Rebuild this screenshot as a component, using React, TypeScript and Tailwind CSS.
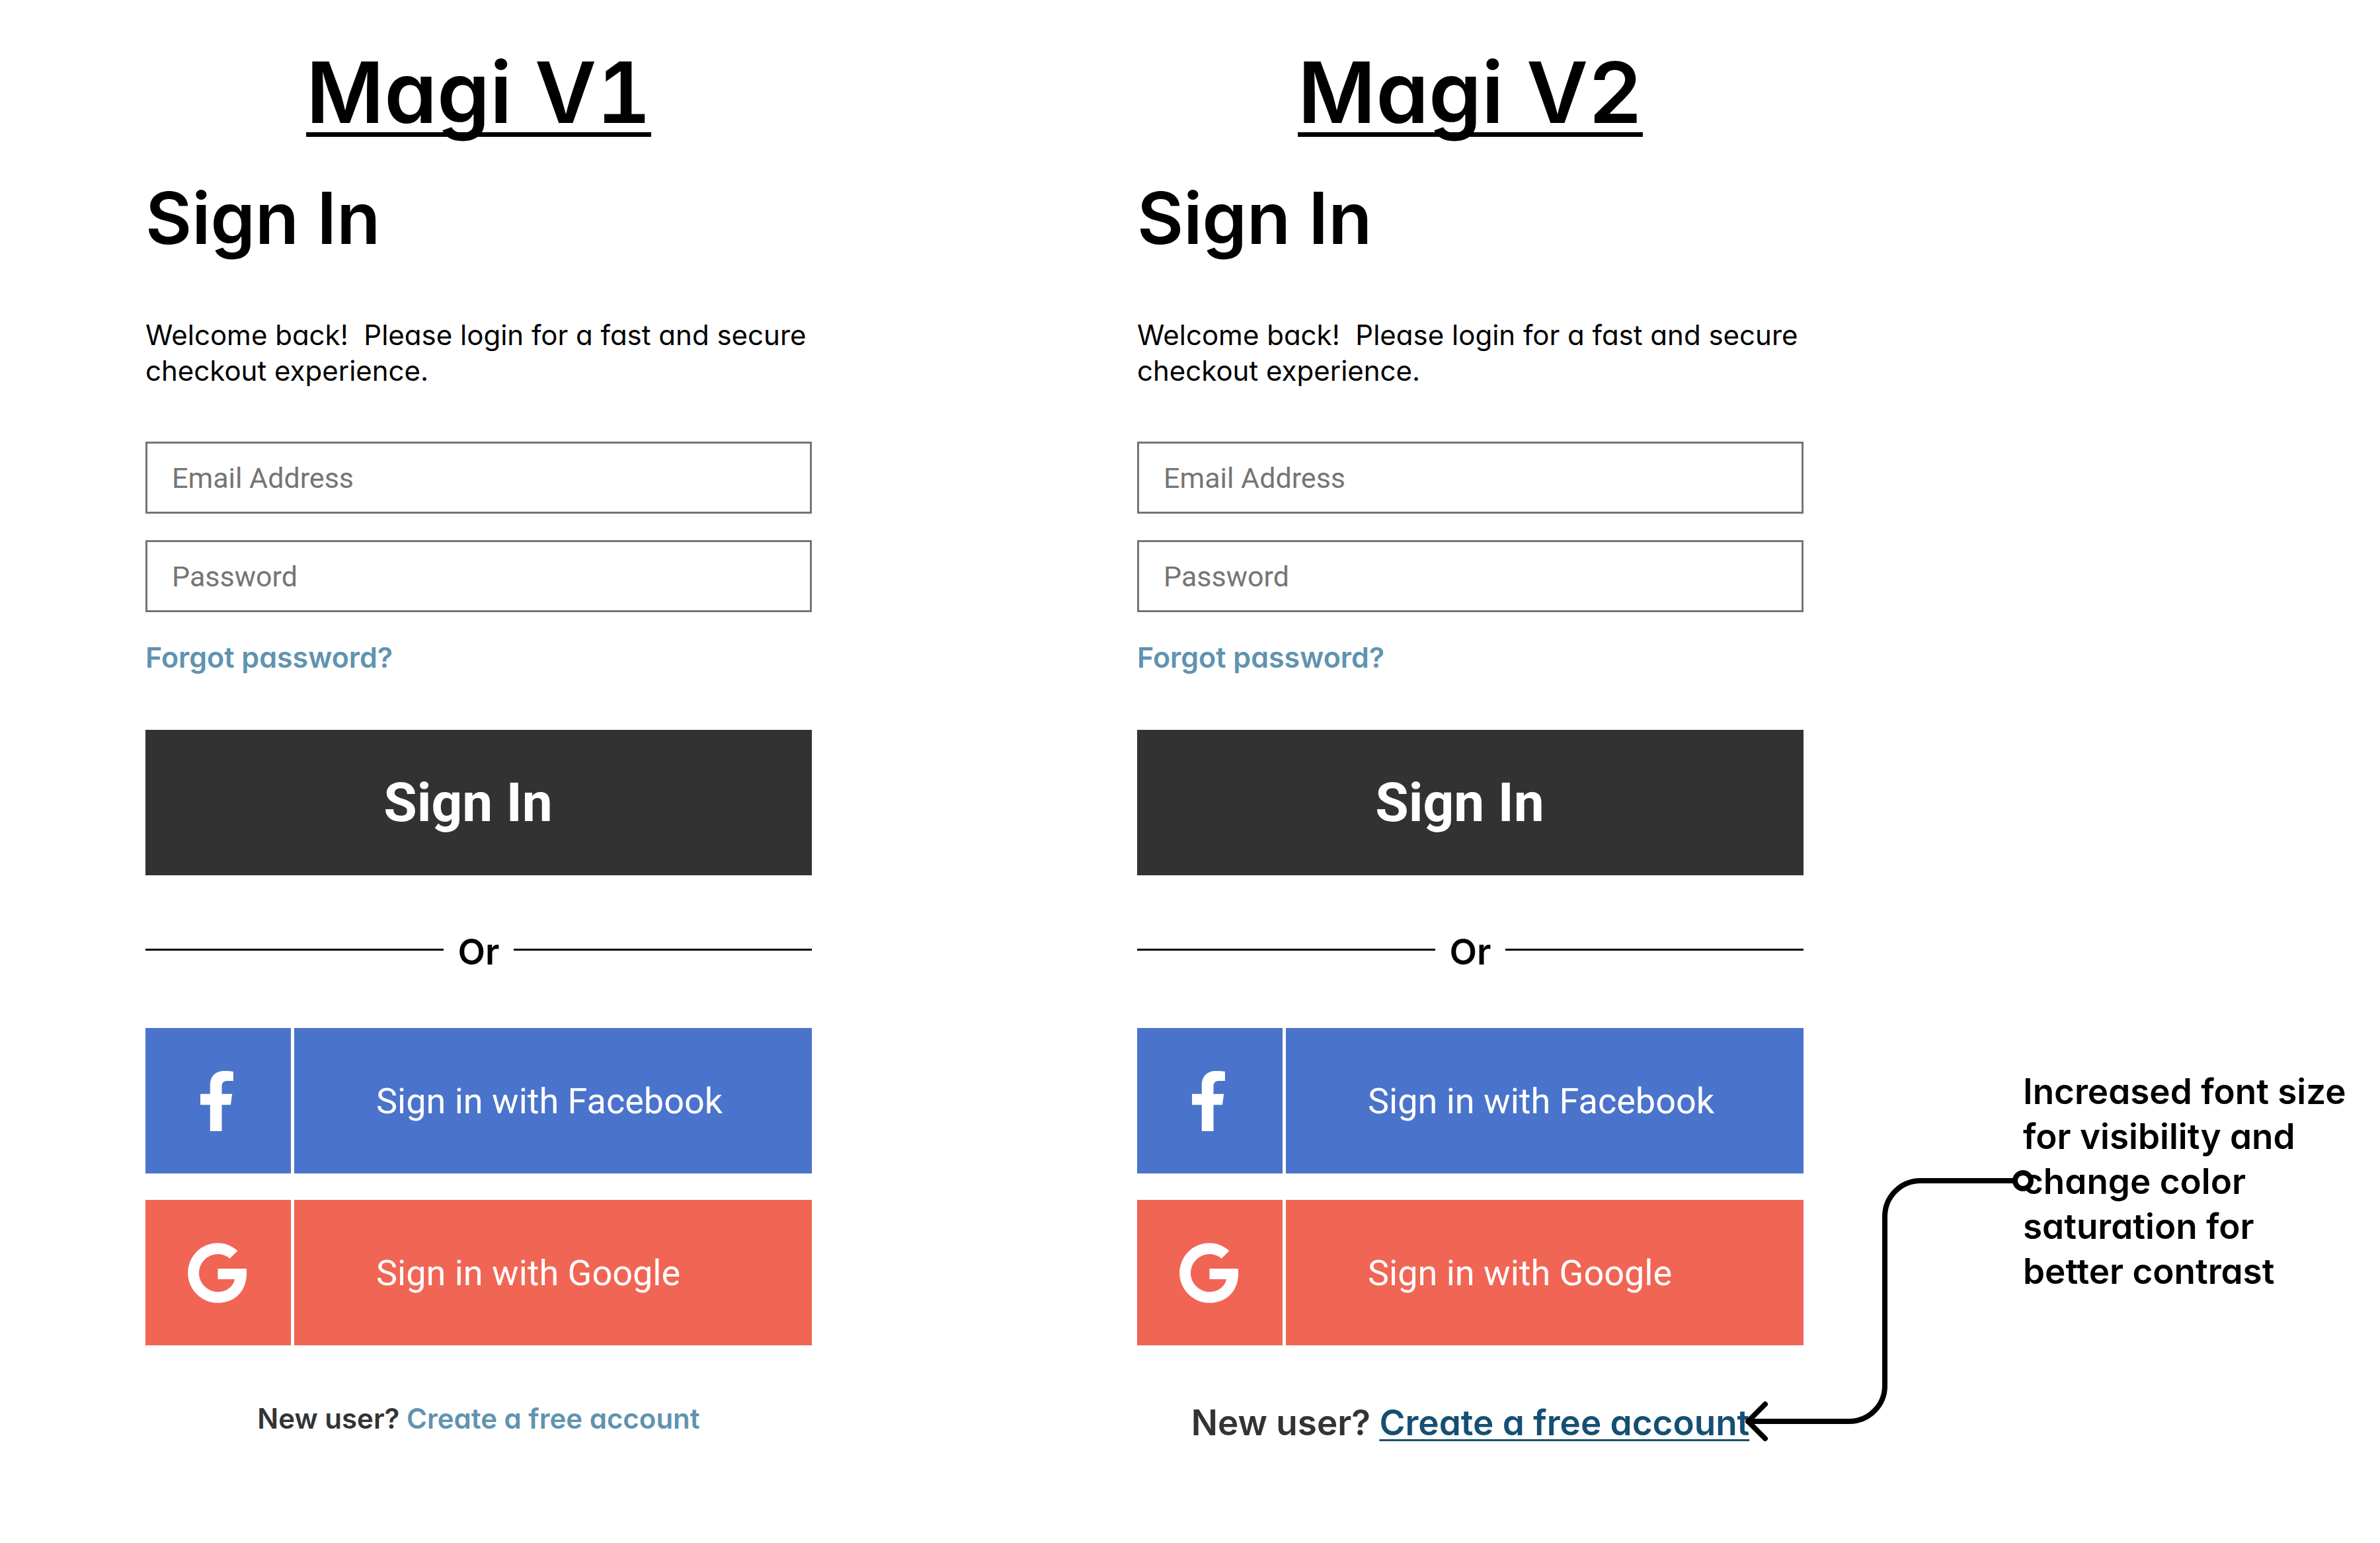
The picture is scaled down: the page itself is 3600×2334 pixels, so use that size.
import { useId } from "react";
import type { ReactNode } from "react";

function FacebookIcon() {
  return (
    <svg viewBox="0 0 149 272" className="h-[91px] w-[50px] fill-white" aria-hidden="true">
      <path d="M44 272V153H0V104H44V66C44 22 70 0 108 0C125 0 140 1 149 3V45H122C102 45 97 56 97 72V104H144L137 153H97V272Z" />
    </svg>
  );
}

function GoogleIcon() {
  return (
    <svg viewBox="0 0 268 273" className="h-[91px] w-[89px] fill-white" aria-hidden="true">
      <path d="M227 36L191 71C177 58 158 51 137 51A86 86 0 1 0 137 223C178 223 208 197 214 165H137V117H267C268 124 268 133 268 140C268 220 212 273 137 273A136.5 136.5 0 1 1 137 0C172 0 203 14 227 36Z" />
    </svg>
  );
}

function Connector() {
  return (
    <svg
      viewBox="0 0 440 412"
      className="pointer-events-none absolute top-[153px] -left-[424px] h-[412px] w-[440px] fill-none stroke-black"
      strokeWidth="8"
      strokeLinecap="round"
      strokeLinejoin="round"
      aria-hidden="true"
    >
      <path d="M411 16H269A54 54 0 0 0 215 70V326A54 54 0 0 1 161 380H8" />
      <path d="M34 354L8 380L34 406" />
      <circle cx="424" cy="16" r="12" className="fill-white" />
    </svg>
  );
}

function TextField({ type, label }: { type: string; label: string }) {
  const id = useId();
  return (
    <input
      id={id}
      type={type}
      aria-label={label}
      placeholder={label}
      className="h-[109px] w-full border-3 border-[#757575] bg-white px-[37px] font-[Roboto,sans-serif] text-[43px] text-black placeholder:text-[#757575]"
    />
  );
}

function SocialButton({ brand, color, icon }: { brand: string; color: string; icon: ReactNode }) {
  return (
    <button type="button" className="flex h-[220px] w-full gap-[5px] text-left text-white">
      <span className={`flex h-full w-[220px] items-center justify-center pr-1 ${color}`}>{icon}</span>
      <span className={`flex h-full flex-1 items-center pl-[124px] font-[Roboto,sans-serif] text-[54px] ${color}`}>
        Sign in with {brand}
      </span>
    </button>
  );
}

function SignInPanel({ title, improved }: { title: string; improved?: boolean }) {
  return (
    <>
      <h1 className="text-center text-[128px] leading-[160px] font-semibold underline decoration-[7px] underline-offset-[14px] [font-feature-settings:'cv11','tnum'] [text-decoration-skip-ink:none]">
        {title}
      </h1>
      <form className="mt-[46px] flex flex-col" onSubmit={(e) => e.preventDefault()}>
        <h2 className="text-[108px] leading-[128px] font-semibold">Sign In</h2>
        <p className="mt-[86px] text-[42px] leading-[54px]">
          Welcome back!&nbsp; Please login for a fast and secure checkout experience.
        </p>
        <div className="mt-20 flex flex-col gap-10">
          <TextField type="email" label="Email Address" />
          <TextField type="password" label="Password" />
        </div>
        <a href="#forgot" className="mt-[41px] self-start text-[43px] leading-[54px] font-semibold text-[#5f93b0]">
          Forgot password?
        </a>
        <button
          type="submit"
          className="mt-[83px] h-[220px] w-full bg-[#323232] pr-8 font-[Roboto,sans-serif] text-[82px] font-bold text-white"
        >
          Sign In
        </button>
        <div className="mt-[84px] flex items-center text-[54px] leading-[64px] font-semibold">
          <span className="mb-2 h-[3px] flex-1 bg-black" />
          <span className="w-[106px] text-center">Or</span>
          <span className="mb-2 h-[3px] flex-1 bg-black" />
        </div>
        <div className="mt-[83px] flex flex-col gap-10">
          <SocialButton brand="Facebook" color="bg-[#4a73cb]" icon={<FacebookIcon />} />
          <SocialButton brand="Google" color="bg-[#f16555]" icon={<GoogleIcon />} />
        </div>
        {improved ? (
          <p className="mt-[85px] text-center text-[53px] leading-[64px] font-semibold text-[#333333]">
            New user?{" "}
            <a
              href="#create"
              className="text-[#154f73] underline decoration-[3px] underline-offset-[6px] [text-decoration-skip-ink:none]"
            >
              Create a free account
            </a>
          </p>
        ) : (
          <p className="mt-[85px] text-center text-[42px] leading-[52px] font-semibold text-[#333333]">
            New user?{" "}
            <a href="#create" className="text-[#5f93b0]">
              Create a free account
            </a>
          </p>
        )}
      </form>
    </>
  );
}

export default function App() {
  return (
    <main className="flex min-h-screen bg-white pt-[60px] pl-[220px] font-[Inter,sans-serif] text-black [font-feature-settings:'cv11']">
      <section className="min-w-0 flex-[1008]">
        <SignInPanel title="Magi V1" />
      </section>
      <section className="ml-[492px] min-w-0 flex-[1008]">
        <SignInPanel title="Magi V2" improved />
      </section>
      <aside className="ml-[332px] min-w-0 flex-[540] pt-[1557px]">
        <div className="relative">
          <p className="pr-10 text-[53px] leading-[68px] font-semibold">
            Increased font size for visibility and change color saturation for better contrast
          </p>
          <Connector />
        </div>
      </aside>
    </main>
  );
}
